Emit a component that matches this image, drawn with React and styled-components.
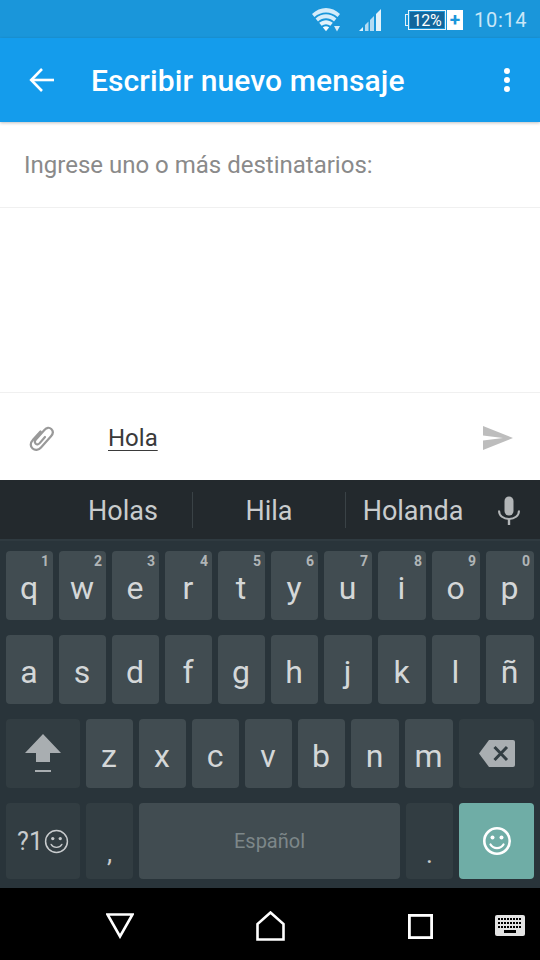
import React from "react";
import styled, { createGlobalStyle } from "styled-components";

const Global = createGlobalStyle`
  html, body { margin: 0; padding: 0; background: #fff; }
  body { font-family: Roboto, "Liberation Sans", sans-serif; }
  * { box-sizing: border-box; }
`;

const Screen = styled.div`
  width: 540px;
  height: 960px;
  display: flex;
  flex-direction: column;
  overflow: hidden;
  background: #fff;
`;

const StatusBar = styled.div`
  height: 38px;
  flex: none;
  background: #1a96da;
  display: flex;
  align-items: center;
  color: #c9e6f7;
  padding-left: 312px;
`;

const WifiIcon = styled.svg`
  width: 30px;
  height: 26px;
  flex: none;
  margin-right: 17px;
`;

const SignalIcon = styled.svg`
  width: 24px;
  height: 24px;
  flex: none;
  margin-right: 22px;
`;

const Battery = styled.div`
  position: relative;
  flex: none;
  width: 41px;
  height: 20px;
  margin: 1px 1px 0 0;
  display: flex;
  align-items: center;
  justify-content: flex-end;
`;

const BatteryNub = styled.span`
  position: absolute;
  left: 0;
  top: 4px;
  width: 4px;
  height: 12px;
  border: 1px solid #dff0fa;
  border-right: none;
`;

const BatteryBody = styled.span`
  width: 38px;
  height: 20px;
  border: 1px solid #e8f4fb;
  background: #13669c;
  color: #fff;
  font-size: 16px;
  line-height: 19px;
  text-align: center;
  letter-spacing: -0.4px;
  box-shadow: inset 0 0 0 1px #1a96da;
`;

const Charge = styled.div`
  flex: none;
  width: 16px;
  height: 20px;
  margin: 1px 11px 0 0;
  background: #fff;
  color: #1a96da;
  font-size: 19px;
  font-weight: 700;
  line-height: 19px;
  text-align: center;
`;

const Clock = styled.span`
  font-size: 20px;
  letter-spacing: 0.7px;
  color: #c9e6f7;
  padding-top: 2px;
`;

const AppBar = styled.header`
  position: relative;
  z-index: 1;
  height: 84px;
  flex: none;
  background: #149cec;
  display: flex;
  align-items: center;
  padding: 0 29px;
  box-shadow: 0 1px 3px rgba(0, 0, 0, 0.25);
`;

const BackIcon = styled.svg`
  width: 26px;
  height: 26px;
  flex: none;
  margin-right: 36px;
`;

const Title = styled.h1`
  flex: 1;
  margin: 0;
  color: #fff;
  font-size: 30px;
  font-weight: 500;
  letter-spacing: 0.1px;
`;

const MoreIcon = styled.svg`
  width: 8px;
  height: 26px;
  flex: none;
`;

const Recipients = styled.div`
  height: 86px;
  flex: none;
  padding: 1px 24px 0;
  display: flex;
  align-items: center;
  border-bottom: 1px solid #f0f0f0;
  color: #8a8a8a;
  font-size: 24px;
`;

const Thread = styled.div`
  flex: 1;
`;

const Composer = styled.div`
  height: 88px;
  flex: none;
  border-top: 1px solid #f0f0f0;
  display: flex;
  align-items: center;
  padding: 2px 27px 0 29px;
`;

const ClipIcon = styled.svg`
  width: 26px;
  height: 28px;
  flex: none;
  margin-right: 53px;
`;

const Draft = styled.div`
  flex: 1;
`;

const DraftWord = styled.span`
  color: #3a3a3a;
  font-size: 24px;
  text-decoration: underline;
  text-decoration-thickness: 1px;
  text-underline-offset: 4px;
`;

const SendIcon = styled.svg`
  width: 30px;
  height: 24px;
  flex: none;
`;

const Keyboard = styled.div`
  height: 408px;
  flex: none;
  background: #29343a;
  display: flex;
  flex-direction: column;
`;

const Suggestions = styled.div`
  height: 61px;
  flex: none;
  background: #23292d;
  border-bottom: 2px solid #2f3a40;
  display: flex;
  align-items: center;
  padding: 0 0 0 54px;
`;

const Suggestion = styled.div`
  width: ${(p) => p.$w}px;
  height: 36px;
  flex: none;
  display: flex;
  align-items: center;
  justify-content: center;
  padding-top: 3px;
  color: #c9cccd;
  font-size: 27px;
  border-right: ${(p) => (p.$last ? "none" : "1px solid #3a4246")};
`;

const MicIcon = styled.svg`
  width: 24px;
  height: 30px;
  flex: none;
  margin: 2px 0 0 17px;
`;

const Rows = styled.div`
  flex: 1;
  display: flex;
  flex-direction: column;
  gap: 15px;
  padding: 10px 6px 9px;
`;

const Row = styled.div`
  display: flex;
  gap: 6px;
  height: ${(p) => p.$h || 69}px;
`;

const Key = styled.div`
  position: relative;
  flex: none;
  width: ${(p) => p.$w}px;
  border-radius: 4px;
  background: ${(p) => p.$bg || "#414c51"};
  color: #d4d7d8;
  font-size: 32px;
  line-height: 1;
  display: flex;
  align-items: center;
  justify-content: center;
  padding: 5px 1px 0 0;
`;

const Hint = styled.span`
  position: absolute;
  top: 3px;
  right: 4px;
  color: #b0b5b7;
  font-size: 14px;
  font-weight: 700;
`;

const FnKey = styled(Key)`
  background: ${(p) => p.$bg || "#323d42"};
  padding: 0;
`;

const Symbols = styled.span`
  display: flex;
  align-items: center;
  color: #c8cbcd;
  font-size: 25px;
  gap: 1px;
`;

const Punct = styled(FnKey)`
  font-size: 26px;
  padding-top: ${(p) => p.$top}px;
  color: #c8cbcd;
`;

const SpaceKey = styled(Key)`
  color: #7d8789;
  font-size: 20px;
  padding: 0;
`;

const NavBar = styled.nav`
  height: 72px;
  flex: none;
  background: #000;
  display: flex;
  align-items: center;
  padding: 4px 0 0 106px;
`;

const NavIcon = styled.svg`
  flex: none;
  margin-right: ${(p) => p.$mr}px;
`;

const row1 = [
  ["q", "1", 47], ["w", "2", 47], ["e", "3", 47], ["r", "4", 47], ["t", "5", 47],
  ["y", "6", 47], ["u", "7", 48], ["i", "8", 48], ["o", "9", 48], ["p", "0", 48],
];
const row2 = [
  ["a", 47], ["s", 47], ["d", 47], ["f", 47], ["g", 47],
  ["h", 47], ["j", 48], ["k", 48], ["l", 48], ["ñ", 48],
];
const row3 = [["z", 47], ["x", 47], ["c", 47], ["v", 47], ["b", 47], ["n", 48], ["m", 48]];

const Smile = ({ size, color, sw }) => (
  <svg width={size} height={size} viewBox="0 0 30 30" fill="none">
    <circle cx="15" cy="15" r={14 - sw / 2} stroke={color} strokeWidth={sw} />
    <circle cx="10.5" cy="11.5" r="2" fill={color} />
    <circle cx="19.5" cy="11.5" r="2" fill={color} />
    <path d="M8.5 18.5c1.5 2.5 3.8 3.6 6.5 3.6s5-1.1 6.5-3.6" stroke={color} strokeWidth={sw * 0.85} strokeLinecap="round" />
  </svg>
);

export default function App() {
  return (
    <Screen>
      <Global />
      <StatusBar>
        <WifiIcon viewBox="0 0 30 26">
          <path d="M0 8C8 0 20 0 28 8L25.6 11C19 5 9 5 2.4 11Z" fill="#d5ecfa" />
          <path d="M3.6 12.4C10 7 18 7 24.4 12.4L22 15.4C17.2 11.2 10.8 11.2 6 15.4Z" fill="#d5ecfa" />
          <path d="M7.2 16.8C11.6 13.4 16.4 13.4 20.8 16.8L18.4 19.8C15.6 17.8 12.4 17.8 9.6 19.8Z" fill="#e2f2fb" />
          <path d="M10.8 21.2C13 19.8 15 19.8 17.2 21.2L14 25.2Z" fill="#f4fbfe" />
          <path d="M22 20H28L25 25.5Z" fill="#d5ecfa" />
        </WifiIcon>
        <SignalIcon viewBox="0 0 24 24">
          <path d="M0 24L4 20V24Z" fill="#e2f2fb" />
          <path d="M6 18L9.5 14.5V24H6Z" fill="#b3dbf3" />
          <path d="M11 13L15 9V24H11Z" fill="#b3dbf3" />
          <path d="M17 7L22 2V24H17Z" fill="#e2f2fb" />
        </SignalIcon>
        <Battery>
          <BatteryNub />
          <BatteryBody>12%</BatteryBody>
        </Battery>
        <Charge>+</Charge>
        <Clock>10:14</Clock>
      </StatusBar>

      <AppBar>
        <BackIcon viewBox="0 0 26 26" fill="none" stroke="#fff" strokeWidth="2.6">
          <path d="M25 13H2.5" />
          <path d="M13 2L2.2 13L13 24" />
        </BackIcon>
        <Title>Escribir nuevo mensaje</Title>
        <MoreIcon viewBox="0 0 8 26" fill="#fff">
          <circle cx="4" cy="4" r="3" />
          <circle cx="4" cy="13" r="3" />
          <circle cx="4" cy="22" r="3" />
        </MoreIcon>
      </AppBar>

      <Recipients>Ingrese uno o más destinatarios:</Recipients>
      <Thread />

      <Composer>
        <ClipIcon viewBox="0 0 26 28" fill="none" stroke="#999" strokeWidth="2.2" strokeLinecap="round">
          <path d="M11.5 7.5L4.2 15.6c-3 3.4-2.9 6.7-.6 8.9 2.4 2.2 5.6 2 8.4-1.1l10-11.2c2.3-2.6 2.2-5.4.3-7.2-2-1.9-4.7-1.6-6.9.9l-8.5 9.6c-1.3 1.5-1.3 3.1-.2 4.2 1.2 1.1 2.7.9 4-.6L16 13" />
        </ClipIcon>
        <Draft><DraftWord>Hola</DraftWord></Draft>
        <SendIcon viewBox="0 0 30 24">
          <path d="M0 0L30 12L0 24V14.5L20 12L0 9.5Z" fill="#bdbdbd" />
        </SendIcon>
      </Composer>

      <Keyboard>
        <Suggestions>
          <Suggestion $w="139">Holas</Suggestion>
          <Suggestion $w="153">Hila</Suggestion>
          <Suggestion $w="134" $last>Holanda</Suggestion>
          <MicIcon viewBox="0 0 24 30" fill="none">
            <rect x="7.5" y="0.5" width="9" height="19" rx="4.5" fill="#b3b6b8" />
            <path d="M2 14.5c0 5.5 4.5 8.5 10 8.5s10-3 10-8.5" stroke="#b3b6b8" strokeWidth="2" />
            <path d="M12 23v6" stroke="#b3b6b8" strokeWidth="2.4" />
          </MicIcon>
        </Suggestions>
        <Rows>
          <Row>
            {row1.map(([l, n, w]) => (
              <Key key={l} $w={w}>{l}<Hint>{n}</Hint></Key>
            ))}
          </Row>
          <Row>
            {row2.map(([l, w]) => (
              <Key key={l} $w={w}>{l}</Key>
            ))}
          </Row>
          <Row>
            <FnKey $w={74}>
              <svg width="36" height="40" viewBox="0 0 36 40">
                <path d="M18 0L36 19H25V28H11V19H0Z" fill="#a9aeb1" />
                <rect x="10" y="36" width="16" height="2" fill="#a9aeb1" />
              </svg>
            </FnKey>
            {row3.map(([l, w]) => (
              <Key key={l} $w={w}>{l}</Key>
            ))}
            <FnKey $w={75}>
              <svg width="36" height="28" viewBox="0 0 36 28">
                <path d="M10 0H34a2 2 0 0 1 2 2V25a2 2 0 0 1-2 2H10L0 13.5Z" fill="#a9aeb1" />
                <path d="M15.5 7L28 20M28 7L15.5 20" stroke="#323d42" strokeWidth="3" />
              </svg>
            </FnKey>
          </Row>
          <Row $h={76}>
            <FnKey $w={74}>
              <Symbols>?1<Smile size={25} color="#c8cbcd" sw={1.8} /></Symbols>
            </FnKey>
            <Punct $w={47} $top={24}>,</Punct>
            <SpaceKey $w={261}>Español</SpaceKey>
            <Punct $w={47} $top={26}>.</Punct>
            <FnKey $w={75} $bg="#6fada6">
              <Smile size={30} color="#fff" sw={2.6} />
            </FnKey>
          </Row>
        </Rows>
      </Keyboard>

      <NavBar>
        <NavIcon $mr={122} width="28" height="26" viewBox="0 0 28 26" fill="none" stroke="#fff" strokeWidth="2.6">
          <path d="M1.5 1.5H26.5L14 23.5Z" />
        </NavIcon>
        <NavIcon $mr={123} width="29" height="30" viewBox="0 0 29 30" fill="none" stroke="#fff" strokeWidth="2.6">
          <path d="M1.5 28.5V13L14.5 1.5L27.5 13V28.5Z" />
        </NavIcon>
        <NavIcon $mr={62} width="25" height="25" viewBox="0 0 25 25" fill="none" stroke="#fff" strokeWidth="2.8">
          <rect x="1.4" y="1.4" width="22.2" height="22.2" />
        </NavIcon>
        <NavIcon $mr={0} width="30" height="22" viewBox="0 0 30 22">
          <rect width="30" height="21" rx="2" fill="#e4e4e4" />
          <path d="M3 4h24M3 8h24M3 12h24" stroke="#000" strokeWidth="2" strokeDasharray="2 1" />
          <rect x="9" y="15" width="12" height="3" fill="#000" />
        </NavIcon>
      </NavBar>
    </Screen>
  );
}
